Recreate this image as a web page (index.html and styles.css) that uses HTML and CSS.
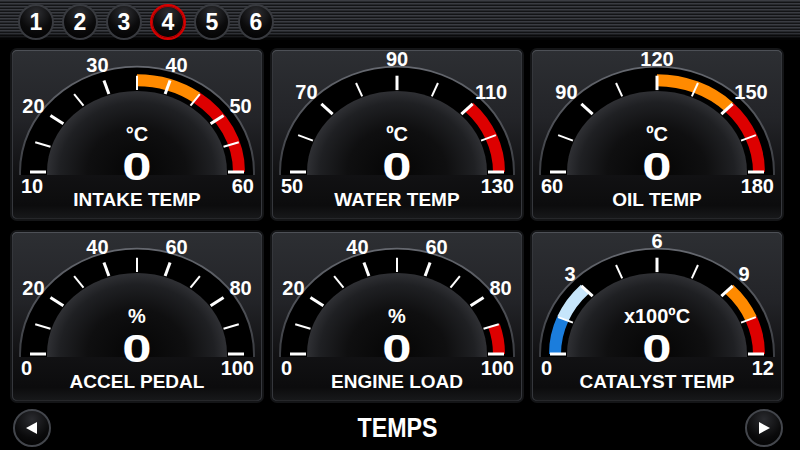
FILE: index.html
```html
<!DOCTYPE html>
<html>
<head>
<meta charset="utf-8">
<title>Temps</title>
<link rel="stylesheet" href="styles.css">
</head>
<body>
<div class="screen">
  <nav class="tabs">
    <span class="tab">1</span>
    <span class="tab">2</span>
    <span class="tab">3</span>
    <span class="tab active">4</span>
    <span class="tab">5</span>
    <span class="tab">6</span>
  </nav>
  <main class="grid">
    <section class="card" id="g1">
      <svg class="dial" viewBox="0 0 250 169"></svg>
      <div class="readout"><span class="unit">°C</span><span class="value">0</span><span class="label">INTAKE TEMP</span></div>
    </section>
    <section class="card" id="g2">
      <svg class="dial" viewBox="0 0 250 169"></svg>
      <div class="readout"><span class="unit">ºC</span><span class="value">0</span><span class="label">WATER TEMP</span></div>
    </section>
    <section class="card" id="g3">
      <svg class="dial" viewBox="0 0 250 169"></svg>
      <div class="readout"><span class="unit">ºC</span><span class="value">0</span><span class="label">OIL TEMP</span></div>
    </section>
    <section class="card" id="g4">
      <svg class="dial" viewBox="0 0 250 169"></svg>
      <div class="readout"><span class="unit">%</span><span class="value">0</span><span class="label">ACCEL PEDAL</span></div>
    </section>
    <section class="card" id="g5">
      <svg class="dial" viewBox="0 0 250 169"></svg>
      <div class="readout"><span class="unit">%</span><span class="value">0</span><span class="label">ENGINE LOAD</span></div>
    </section>
    <section class="card" id="g6">
      <svg class="dial" viewBox="0 0 250 169"></svg>
      <div class="readout"><span class="unit">x100ºC</span><span class="value">0</span><span class="label">CATALYST TEMP</span></div>
    </section>
  </main>
  <footer class="bottom">
    <button class="nav-btn" type="button" aria-label="Previous">
      <svg class="arrow" viewBox="0 0 14 14" width="14" height="14"><polygon points="12,1 12,13 1,7" fill="#fff"/></svg>
    </button>
    <span class="title">TEMPS</span>
    <button class="nav-btn" type="button" aria-label="Next">
      <svg class="arrow" viewBox="0 0 14 14" width="14" height="14"><polygon points="2,1 2,13 13,7" fill="#fff"/></svg>
    </button>
  </footer>
</div>
<script src="script.js"></script>
</body>
</html>
```

FILE: styles.css
```css
* { box-sizing: border-box; margin: 0; padding: 0; }
html, body { width: 800px; height: 450px; background: #000; overflow: hidden; }
body { font-family: "Liberation Sans", Arial, sans-serif; font-weight: bold; color: #fff; }

.tabs {
  height: 40px;
  display: flex;
  gap: 8px;
  padding: 4px 0 0 18px;
  background:
    linear-gradient(to bottom, rgba(0,0,0,0) 32px, #000 40px),
    repeating-linear-gradient(to bottom, #3a3c42 0, #3a3c42 1px, #27292d 1px, #27292d 2px, #131416 2px, #131416 3px);
}
.tab {
  width: 36px; height: 36px;
  border-radius: 50%;
  border: 2px solid #383a3f;
  background: radial-gradient(circle at 50% 22%, #2e2f33 0, #0b0b0c 55%, #000 100%);
  display: flex; align-items: center; justify-content: center;
  font-size: 23px; line-height: 1;
}
.tab.active { border-color: #d80000; box-shadow: inset 0 0 0 1px #c00000; }

.grid {
  display: grid;
  grid-template-columns: repeat(3, 250px);
  grid-auto-rows: 169px;
  column-gap: 10px;
  row-gap: 13px;
  margin: 10px 0 0 12px;
}
.card {
  display: grid;
  border-radius: 5px;
  background: linear-gradient(to bottom, #2d2f33 0%, #232428 40%, #121214 72%, #0c0c0d 92%, #18191b 100%);
  box-shadow: inset 0 1px 0 #4d5056, inset 1px 0 0 #35373c, inset -1px 0 0 #35373c, inset 0 -1px 0 #26272a, 0 0 0 2px #141517;
}
.dial, .readout { grid-area: 1 / 1; }
.dial { display: block; width: 250px; height: 169px; overflow: visible; }
.dial text { font: bold 20px "Liberation Sans", Arial, sans-serif; fill: #fff; }
.readout {
  display: flex;
  flex-direction: column;
  align-items: center;
  padding-top: 73px;
}
.unit { font-size: 20px; line-height: 22px; height: 22px; }
.value { font-size: 39px; line-height: 36px; height: 36px; margin-top: 4px; display: inline-block; transform: scaleX(1.35); }
.label { font-size: 19px; line-height: 22px; margin-top: 4px; }

.bottom {
  display: flex;
  align-items: center;
  justify-content: space-between;
  height: 38px;
  margin-top: 8px;
  padding: 0 17px 0 13px;
}
.nav-btn {
  width: 38px; height: 38px;
  border-radius: 50%;
  border: 2px solid #43464c;
  background: radial-gradient(circle at 50% 25%, #2a2b2f 0, #0a0a0b 60%, #000 100%);
  display: flex; align-items: center; justify-content: center;
}
.arrow { display: block; }
.title { font-size: 27px; line-height: 1; display: inline-block; transform: scaleX(0.86); }
```

FILE: script.js
```js
(function () {
  var CX = 125, CY = 122, K = 0.9;
  var ORANGE = '#ff8a00', RED = '#dd0000';
  var gauges = [
    { id: 'g1', min: 10, max: 60, ticks: 11, labels: [10, 20, 30, 40, 50, 60], segs: [[35, 45, ORANGE], [45, 60, RED]] },
    { id: 'g2', min: 50, max: 130, ticks: 9, labels: [50, 70, 90, 110, 130], segs: [[110, 130, RED]] },
    { id: 'g3', min: 60, max: 180, ticks: 9, labels: [60, 90, 120, 150, 180], segs: [[120, 150, ORANGE], [150, 180, RED]] },
    { id: 'g4', min: 0, max: 100, ticks: 11, labels: [0, 20, 40, 60, 80, 100], segs: [] },
    { id: 'g5', min: 0, max: 100, ticks: 11, labels: [0, 20, 40, 60, 80, 100], segs: [[90, 100, RED]] },
    { id: 'g6', min: 0, max: 12, ticks: 9, labels: [0, 3, 6, 9, 12], segs: [[0, 1.5, '#1b7ddc'], [1.5, 3, '#c6e5fb'], [9, 10.5, ORANGE], [10.5, 12, RED]] }
  ];
  function f(n) { return n.toFixed(2); }
  function pt(r, a) { return [CX + r * Math.cos(a), CY - K * r * Math.sin(a)]; }
  function half(r, ext) {
    return 'M' + f(CX - r) + ' ' + f(CY + ext) + ' L' + f(CX - r) + ' ' + CY +
      ' A' + r + ' ' + f(K * r) + ' 0 0 1 ' + f(CX + r) + ' ' + CY +
      ' L' + f(CX + r) + ' ' + f(CY + ext) + ' Z';
  }
  function arc(r, a1, a2) {
    var p1 = pt(r, a1), p2 = pt(r, a2);
    return 'M' + f(p1[0]) + ' ' + f(p1[1]) + ' A' + r + ' ' + f(K * r) + ' 0 0 1 ' + f(p2[0]) + ' ' + f(p2[1]);
  }
  gauges.forEach(function (g, i) {
    var card = document.getElementById(g.id);
    if (!card) return;
    var svg = card.querySelector('.dial');
    var ang = function (v) { return Math.PI * (1 - (v - g.min) / (g.max - g.min)); };
    var s = '<defs>' +
      '<linearGradient id="rim' + i + '" x1="0" y1="0" x2="0" y2="1">' +
      '<stop offset="0" stop-color="#666970"/><stop offset="1" stop-color="#3a3c41"/></linearGradient>' +
      '<radialGradient id="dome' + i + '" gradientUnits="userSpaceOnUse" cx="' + CX + '" cy="' + CY + '" r="90" ' +
      'gradientTransform="translate(' + CX + ' ' + CY + ') scale(1 ' + K + ') translate(' + (-CX) + ' ' + (-CY) + ')">' +
      '<stop offset="0" stop-color="#050505"/><stop offset="0.55" stop-color="#0f0f10"/>' +
      '<stop offset="0.86" stop-color="#1f2023"/><stop offset="1" stop-color="#2f3034"/></radialGradient>' +
      '</defs>';
    s += '<path d="' + half(118, 3) + '" fill="url(#rim' + i + ')"/>';
    s += '<path d="' + half(116, 3) + '" fill="#000"/>';
    g.segs.forEach(function (sg) {
      s += '<path d="' + arc(102, ang(sg[0]), ang(sg[1])) + '" stroke="' + sg[2] + '" stroke-width="12" fill="none"/>';
    });
    s += '<path d="' + half(90, 3) + '" fill="url(#dome' + i + ')"/>';
    for (var t = 0; t < g.ticks; t++) {
      var v = g.min + (g.max - g.min) * t / (g.ticks - 1);
      var a = ang(v);
      var p1 = pt(91, a), p2 = pt(107, a);
      var major = g.labels.some(function (l) { return Math.abs(l - v) < 1e-6; });
      s += '<line x1="' + f(p1[0]) + '" y1="' + f(p1[1]) + '" x2="' + f(p2[0]) + '" y2="' + f(p2[1]) +
        '" stroke="#fff" stroke-width="' + (major ? 3 : 2) + '"/>';
    }
    g.labels.forEach(function (l) {
      var txt = String(l), x, y, anchor = 'middle';
      if (l === g.min) { x = CX - 116; y = CY + 14; anchor = 'start'; }
      else if (l === g.max) { x = CX + 117; y = CY + 14; anchor = 'end'; }
      else {
        var a = ang(l);
        x = CX + (128 + (txt.length - 2) * 5) * Math.cos(a);
        y = CY - 113 * Math.sin(a);
      }
      s += '<text x="' + f(x) + '" y="' + f(y) + '" text-anchor="' + anchor + '" dominant-baseline="central">' + txt + '</text>';
    });
    svg.innerHTML = s;
  });
})();
```
